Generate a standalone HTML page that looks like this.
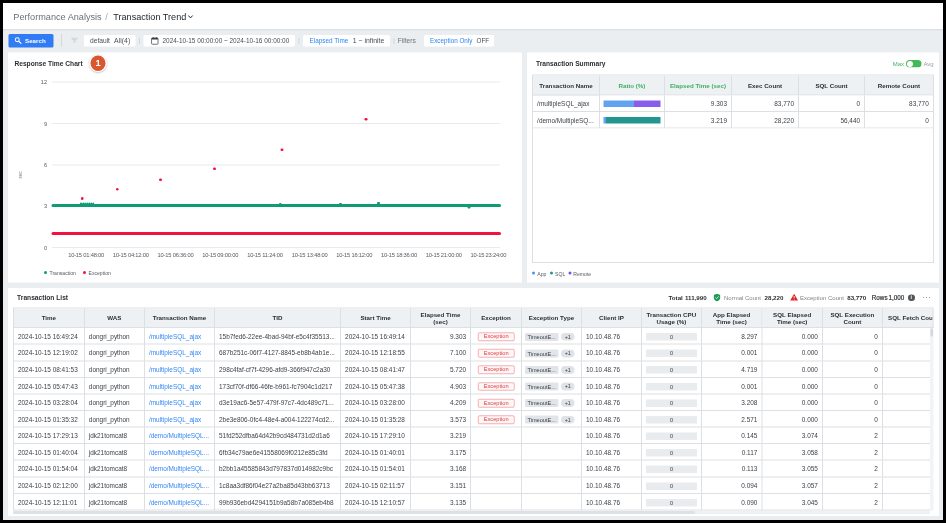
<!DOCTYPE html>
<html><head><meta charset="utf-8"><title>Transaction Trend</title>
<style>
html,body{width:946px;height:523px;overflow:hidden;background:#000;margin:0;padding:0}
#app{position:absolute;left:3px;top:3px;width:940px;height:516.5px;background:#ebeef1;overflow:hidden}
#page{position:absolute;left:-3px;top:-3px;width:1892px;height:1046px;transform:scale(0.5);transform-origin:0 0;filter:saturate(1.001);font-family:"Liberation Sans",sans-serif;color:#3a3f45}

*{box-sizing:border-box;margin:0;padding:0}
.abs{position:absolute}
.hdr{position:absolute;left:0;top:0;width:1892px;height:57.8px;background:#fff}
.t{position:absolute;white-space:nowrap;line-height:1}
.panel{position:absolute;background:#fff}
.pt{font-weight:bold;font-size:13.3px;color:#2b2f33}
.chip{position:absolute;background:#fff;border-radius:3px;height:23.2px;top:70px}
.grid{position:absolute;left:104px;width:896px;height:2px;background:#e8eaed}
.yl{position:absolute;font-size:11.2px;color:#555b61;text-align:right;width:40px;left:54px;line-height:1}
.xl{position:absolute;font-size:11.5px;color:#555b61;top:504.4px;width:100px;text-align:center;line-height:1;letter-spacing:-0.4px}
.dot{position:absolute;width:5.8px;height:5.8px;border-radius:50%;background:#f5103a}
.cell{position:absolute;border-right:2px solid #dce0e4;border-bottom:2px solid #dce0e4;font-size:12.9px;line-height:1;white-space:nowrap;overflow:hidden;color:#3a3f45}
.hc{background:#eef1f4;padding-top:1.6px;font-weight:bold;color:#2b2f33;text-align:center;display:flex;align-items:center;justify-content:center;line-height:1.19;font-size:12.4px}
.c{display:flex;align-items:center;padding:3.6px 8px 0 8px}
.r{justify-content:flex-end}
.lnk{color:#3387f2}
.exc{display:inline-block;border:1.8px solid #ea666c;color:#dc4046;font-size:11.4px;width:72.6px;height:16.8px;line-height:13.4px;text-align:center;border-radius:2.8px;background:#fff6f6;margin-left:5.8px}
.tag{display:inline-block;background:#e1e5e9;color:#3a3f45;font-size:11.2px;height:16px;line-height:16px;width:66.4px;text-align:center;border-radius:2.4px;margin-left:-1.6px}
.pill{display:inline-block;background:#dfe3e7;color:#3a3f45;font-size:11px;height:15.6px;line-height:15.6px;width:27.6px;text-align:center;border-radius:8px;margin-left:5.2px}
.cpu{display:block;width:103.6px;height:15px;background:#e9ecef;font-size:12.4px;line-height:15px;text-align:center;color:#4a4f55;margin-left:0.2px}

</style></head><body>
<div id="app"><div id="page">
<div class="hdr"></div><div class="abs" style="left:0;top:57.8px;width:1892px;height:4.8px;background:linear-gradient(#d9dde1,#ebeef1)"></div>
<div class="t" style="left:26.6px;top:24.4px;font-size:18.3px;color:#6b7178">Performance Analysis</div>
<div class="t" style="left:210.6px;top:24.4px;font-size:18.5px;color:#a4a9af">/</div>
<div class="t" style="left:226.6px;top:24.4px;font-size:18.2px;color:#24282c">Transaction Trend</div>
<svg class="abs" style="left:375px;top:29.4px" width="12" height="10" viewBox="0 0 6 5"><path d="M0.8 1 L3 3.4 L5.2 1" fill="none" stroke="#24282c" stroke-width="1"/></svg>

<div class="abs" style="left:17px;top:67.6px;width:89.6px;height:27.6px;background:#2f7cf6;border-radius:3px;box-shadow:0 0 0 1.4px #f3ecdc"></div>
<svg class="abs" style="left:29.2px;top:74.4px" width="14.8" height="14.8" viewBox="0 0 8 8"><circle cx="3" cy="3" r="2.1" fill="none" stroke="#fff" stroke-width="1.1"/><path d="M4.6 4.6 L7 7" stroke="#fff" stroke-width="1.2" stroke-linecap="round"/></svg>
<div class="t" style="left:50px;top:75.4px;font-size:12.4px;font-weight:bold;color:#fff">Search</div>
<div class="abs" style="left:121.6px;top:68px;width:2px;height:25px;background:#d3d7db"></div>
<svg class="abs" style="left:142.4px;top:75.2px" width="14" height="11.2" viewBox="0 0 7 5.6"><path d="M0.2 0.6h6.6M1.3 2.2h4.4M2.3 3.7h2.4M3.1 5h0.8" stroke="#c3c7cc" stroke-width="0.85" fill="none"/></svg>
<div class="chip" style="left:168px;width:102.8px"></div>
<div class="t" style="left:180px;top:75.2px;font-size:13.3px;color:#4a4f55">default</div>
<div class="t" style="left:228.2px;top:75.2px;font-size:13.8px;color:#4a4f55">All(4)</div>
<div class="abs" style="left:278px;top:76px;width:2px;height:12px;background:#d3d7db"></div>
<div class="chip" style="left:287.2px;width:302.8px"></div>
<svg class="abs" style="left:301.2px;top:72.8px" width="17.2" height="17.2" viewBox="0 0 9 9"><rect x="1.1" y="1.5" width="6.8" height="6.6" rx="0.9" fill="none" stroke="#3a3f45" stroke-width="0.75"/><rect x="1.1" y="1.5" width="6.8" height="1.7" rx="0.5" fill="#3a3f45"/><path d="M2.8 0.5v1.4M6.2 0.5v1.4" stroke="#3a3f45" stroke-width="0.75"/></svg>
<div class="t" style="left:325px;top:75.6px;font-size:12.86px;color:#4a4f55">2024-10-15 00:00:00 ~ 2024-10-16 00:00:00</div>
<div class="abs" style="left:597px;top:76px;width:2px;height:12px;background:#d3d7db"></div>
<div class="chip" style="left:606px;width:174px"></div>
<div class="t" style="left:619px;top:75.6px;font-size:12.8px;color:#2f86f0">Elapsed Time</div>
<div class="t" style="left:705.6px;top:75.2px;font-size:13.7px;color:#4a4f55">1 ~ infinite</div>
<div class="abs" style="left:787px;top:76px;width:2px;height:12px;background:#d3d7db"></div>
<div class="t" style="left:795.6px;top:75.4px;font-size:13.2px;color:#6b7178">Filters</div>
<div class="chip" style="left:848px;width:140px"></div>
<div class="t" style="left:860px;top:75.6px;font-size:12.6px;color:#2f86f0">Exception Only</div>
<div class="t" style="left:953px;top:75.6px;font-size:12.6px;color:#4a4f55">OFF</div>

<div class="panel" style="left:16px;top:105.2px;width:1028px;height:459.8px"></div>
<div class="t pt" style="left:28.8px;top:119.8px">Response Time Chart</div>
<div class="abs" style="left:178.4px;top:109px;width:35.2px;height:35.2px;border-radius:50%;background:#fff;box-shadow:0 1.2px 3.2px rgba(0,0,0,.35)"></div>
<div class="abs" style="left:180.6px;top:111.2px;width:30.8px;height:30.8px;border-radius:50%;background:#d9562f"></div>
<div class="t" style="left:191px;top:116.8px;font-size:18.8px;font-weight:bold;color:#fff">1</div>

<div class="grid" style="top:163px"></div><div class="yl" style="top:159.4px">12</div>
<div class="grid" style="top:246px"></div><div class="yl" style="top:242.4px">9</div>
<div class="grid" style="top:328.8px"></div><div class="yl" style="top:325.2px">6</div>
<div class="grid" style="top:410.4px"></div><div class="yl" style="top:406.8px">3</div>
<div class="grid" style="top:494.4px"></div><div class="yl" style="top:490.8px">0</div>
<div class="t" style="left:36.6px;top:357px;font-size:9.2px;color:#6b7178;transform:rotate(-90deg);transform-origin:left top">sec</div>
<div class="abs" style="left:103px;top:408px;width:899px;height:6px;background:#109b73;border-radius:3px"></div>
<div class="abs" style="left:103px;top:463.6px;width:899px;height:6px;background:#f2123c;border-radius:3px"></div>
<div class="abs" style="left:160.4px;top:405.4px;width:3.4px;height:5px;background:#0b9c73;border-radius:2px"></div>
<div class="abs" style="left:164.5px;top:405.4px;width:3.4px;height:5px;background:#0b9c73;border-radius:2px"></div>
<div class="abs" style="left:168.6px;top:405.4px;width:3.4px;height:5px;background:#0b9c73;border-radius:2px"></div>
<div class="abs" style="left:172.7px;top:405.4px;width:3.4px;height:5px;background:#0b9c73;border-radius:2px"></div>
<div class="abs" style="left:176.8px;top:405.4px;width:3.4px;height:5px;background:#0b9c73;border-radius:2px"></div>
<div class="abs" style="left:180.9px;top:405.4px;width:3.4px;height:5px;background:#0b9c73;border-radius:2px"></div>
<div class="abs" style="left:185px;top:405.4px;width:3.4px;height:5px;background:#0b9c73;border-radius:2px"></div>
<div class="abs" style="left:160.4px;top:406.6px;width:28.4px;height:5px;background:#0b9c73;border-radius:2px"></div>
<div class="abs" style="left:557.6px;top:405.6px;width:5.8px;height:5px;background:#0b9c73;border-radius:2px"></div>
<div class="abs" style="left:678.2px;top:405.6px;width:5.8px;height:5px;background:#0b9c73;border-radius:2px"></div>
<div class="abs" style="left:754px;top:404px;width:5.8px;height:5px;background:#0b9c73;border-radius:2px"></div>
<div class="abs" style="left:934.8px;top:411.8px;width:5.8px;height:5px;background:#0b9c73;border-radius:2px"></div>
<div class="dot" style="left:161.5px;top:394.1px"></div>
<div class="dot" style="left:231.5px;top:375.5px"></div>
<div class="dot" style="left:318.3px;top:356.5px"></div>
<div class="dot" style="left:426.3px;top:334.5px"></div>
<div class="dot" style="left:561.1px;top:296.5px"></div>
<div class="dot" style="left:729.1px;top:235.5px"></div>
<div class="xl" style="left:122.2px">10-15 01:48:00</div>
<div class="xl" style="left:211.6px">10-15 04:12:00</div>
<div class="xl" style="left:301px">10-15 06:36:00</div>
<div class="xl" style="left:390.4px">10-15 09:00:00</div>
<div class="xl" style="left:479.8px">10-15 11:24:00</div>
<div class="xl" style="left:569.2px">10-15 13:48:00</div>
<div class="xl" style="left:658.6px">10-15 16:12:00</div>
<div class="xl" style="left:748px">10-15 18:36:00</div>
<div class="xl" style="left:837.4px">10-15 21:00:00</div>
<div class="xl" style="left:926.8px">10-15 23:24:00</div>
<div class="abs" style="left:87.6px;top:542.2px;width:6px;height:6px;border-radius:50%;background:#0b9c73"></div>
<div class="t" style="left:99px;top:542.4px;font-size:10.2px;color:#555b61">Transaction</div>
<div class="abs" style="left:166px;top:542.2px;width:6px;height:6px;border-radius:50%;background:#f0143c"></div>
<div class="t" style="left:177px;top:542.4px;font-size:10.2px;color:#555b61">Exception</div>

<div class="panel" style="left:1054px;top:105.2px;width:824px;height:459.8px"></div>
<div class="t pt" style="left:1072px;top:120.2px">Transaction Summary</div>
<div class="t" style="left:1785.4px;top:121.4px;font-size:12px;color:#43b660">Max</div>
<div class="abs" style="left:1812px;top:120px;width:31px;height:15.2px;border-radius:8px;background:#45b85a"></div>
<div class="abs" style="left:1813.6px;top:121.6px;width:12px;height:12px;border-radius:50%;background:#fff"></div>
<div class="t" style="left:1846.8px;top:121.4px;font-size:12px;color:#9aa0a6">Avg</div>

<div class="abs" style="left:1064.2px;top:149px;width:803.4px;height:376.6px;border:2px solid #dce0e4"></div>
<div class="cell hc" style="left:1066.2px;top:151px;width:133.6px;height:39.8px;color:#2b2f33;padding-top:3px">Transaction Name</div>
<div class="cell hc" style="left:1199.8px;top:151px;width:130px;height:39.8px;color:#3bb05f;padding-top:3px">Ratio (%)</div>
<div class="cell hc" style="left:1329.8px;top:151px;width:134.2px;height:39.8px;color:#3bb05f;padding-top:3px">Elapsed Time (sec)</div>
<div class="cell hc" style="left:1464px;top:151px;width:134px;height:39.8px;color:#2b2f33;padding-top:3px">Exec Count</div>
<div class="cell hc" style="left:1598px;top:151px;width:132.2px;height:39.8px;color:#2b2f33;padding-top:3px">SQL Count</div>
<div class="cell hc" style="left:1730.2px;top:151px;width:137.4px;height:39.8px;color:#2b2f33;padding-top:3px">Remote Count</div>
<div class="cell c" style="left:1066.2px;top:190.8px;width:133.6px;height:33px;">/multipleSQL_ajax</div>
<div class="cell c" style="left:1199.8px;top:190.8px;width:130px;height:33px;padding:2.4px 0 0 7.6px"><span style="display:block;width:60.6px;height:13.6px;background:#62a3f1"></span><span style="display:block;width:52.8px;height:13.6px;background:#885cec"></span></div>
<div class="cell c r" style="left:1329.8px;top:190.8px;width:134.2px;height:33px;">9.303</div>
<div class="cell c r" style="left:1464px;top:190.8px;width:134px;height:33px;">83,770</div>
<div class="cell c r" style="left:1598px;top:190.8px;width:132.2px;height:33px;">0</div>
<div class="cell c r" style="left:1730.2px;top:190.8px;width:137.4px;height:33px;">83,770</div>
<div class="cell c" style="left:1066.2px;top:223.8px;width:133.6px;height:33.2px;">/demo/MultipleSQ...</div>
<div class="cell c" style="left:1199.8px;top:223.8px;width:130px;height:33.2px;padding:2.4px 0 0 7.6px"><span style="display:block;width:4.4px;height:13.6px;background:#62a3f1"></span><span style="display:block;width:109px;height:13.6px;background:#22968f"></span></div>
<div class="cell c r" style="left:1329.8px;top:223.8px;width:134.2px;height:33.2px;">3.219</div>
<div class="cell c r" style="left:1464px;top:223.8px;width:134px;height:33.2px;">28,220</div>
<div class="cell c r" style="left:1598px;top:223.8px;width:132.2px;height:33.2px;">56,440</div>
<div class="cell c r" style="left:1730.2px;top:223.8px;width:137.4px;height:33.2px;">0</div>
<div class="abs" style="left:1064.2px;top:542.6px;width:6px;height:6px;border-radius:50%;background:#4a90f0"></div>
<div class="t" style="left:1074.6px;top:542.6px;font-size:10.2px;color:#555b61">App</div>
<div class="abs" style="left:1100.2px;top:542.6px;width:6px;height:6px;border-radius:50%;background:#22968f"></div>
<div class="t" style="left:1110.2px;top:542.6px;font-size:10.2px;color:#555b61">SQL</div>
<div class="abs" style="left:1136.6px;top:542.6px;width:6px;height:6px;border-radius:50%;background:#7a4cf0"></div>
<div class="t" style="left:1146.6px;top:542.6px;font-size:10.2px;color:#555b61">Remote</div>

<div class="panel" style="left:16px;top:575.6px;width:1862px;height:456.4px"></div>
<div class="t pt" style="left:34.2px;top:588.2px">Transaction List</div>
<div class="t" style="left:1337px;top:589px;font-size:12.4px;font-weight:bold;color:#2b2f33">Total</div>
<div class="t" style="left:1370px;top:589px;font-size:12.4px;font-weight:bold;color:#2b2f33">111,990</div>
<svg class="abs" style="left:1427px;top:587px" width="14" height="16" viewBox="0 0 7 8"><path d="M3.5 0.2 L6.8 1.5 V4 C6.8 6 5.2 7.3 3.5 7.9 C1.8 7.3 0.2 6 0.2 4 V1.5 Z" fill="#1d9a55"/><path d="M2 4 L3.1 5.1 L5.1 2.9" fill="none" stroke="#fff" stroke-width="0.8"/></svg>
<div class="t" style="left:1448px;top:589.4px;font-size:12px;color:#80868c">Normal Count</div>
<div class="t" style="left:1529px;top:589px;font-size:12.4px;font-weight:bold;color:#2b2f33">28,220</div>
<svg class="abs" style="left:1579.8px;top:587.4px" width="16.6" height="14.8" viewBox="0 0 9 8"><path d="M4.5 0.3 L8.8 7.7 H0.2 Z" fill="#e0242c"/><path d="M4.5 2.8 V5.2" stroke="#fff" stroke-width="0.9"/><circle cx="4.5" cy="6.4" r="0.5" fill="#fff"/></svg>
<div class="t" style="left:1600px;top:589.4px;font-size:12px;color:#80868c">Exception Count</div>
<div class="t" style="left:1694.4px;top:589px;font-size:12.4px;font-weight:bold;color:#2b2f33">83,770</div>
<div class="t" style="left:1743.6px;top:589.4px;font-size:12.6px;color:#2b2f33;-webkit-text-stroke:0.36px #2b2f33">Rows</div>
<div class="t" style="left:1777.2px;top:589.4px;font-size:12.6px;color:#2b2f33;-webkit-text-stroke:0.36px #2b2f33">1,000</div>
<div class="abs" style="left:1816px;top:588.8px;width:13.6px;height:13.6px;border-radius:50%;background:#4f555b"></div>
<div class="t" style="left:1821.2px;top:590.4px;font-size:10.4px;font-weight:bold;color:#fff">i</div>
<div class="t" style="left:1845px;top:587.2px;font-size:14px;color:#6b7178;letter-spacing:1.2px">&#183;&#183;&#183;</div>

<div class="abs" style="left:25.8px;top:615.2px;width:1841.4px;height:405.76px;border-left:2px solid #dce0e4;border-top:2px solid #dce0e4"></div>
<div class="cell hc" style="left:27.8px;top:617.2px;width:141.8px;height:39px;">Time</div>
<div class="cell hc" style="left:169.6px;top:617.2px;width:120.2px;height:39px;">WAS</div>
<div class="cell hc" style="left:289.8px;top:617.2px;width:140.2px;height:39px;">Transaction Name</div>
<div class="cell hc" style="left:430px;top:617.2px;width:252.2px;height:39px;">TID</div>
<div class="cell hc" style="left:682.2px;top:617.2px;width:139.6px;height:39px;">Start Time</div>
<div class="cell hc" style="left:821.8px;top:617.2px;width:120.4px;height:39px;">Elapsed Time<br>(sec)</div>
<div class="cell hc" style="left:942.2px;top:617.2px;width:101.6px;height:39px;">Exception</div>
<div class="cell hc" style="left:1043.8px;top:617.2px;width:120.2px;height:39px;">Exception Type</div>
<div class="cell hc" style="left:1164px;top:617.2px;width:120px;height:39px;">Client IP</div>
<div class="cell hc" style="left:1284px;top:617.2px;width:119.6px;height:39px;">Transaction CPU<br>Usage (%)</div>
<div class="cell hc" style="left:1403.6px;top:617.2px;width:121.2px;height:39px;">App Elapsed<br>Time (sec)</div>
<div class="cell hc" style="left:1524.8px;top:617.2px;width:121px;height:39px;">SQL Elapsed<br>Time (sec)</div>
<div class="cell hc" style="left:1645.8px;top:617.2px;width:120px;height:39px;">SQL Execution<br>Count</div>
<div class="cell hc" style="left:1765.8px;top:617.2px;width:101.4px;height:39px;justify-content:flex-start;padding-left:10.4px;">SQL Fetch Cour</div>
<div class="cell c" style="left:27.8px;top:656.2px;width:141.8px;height:33.16px;">2024-10-15 16:49:24</div>
<div class="cell c" style="left:169.6px;top:656.2px;width:120.2px;height:33.16px;">dongri_python</div>
<div class="cell c" style="left:289.8px;top:656.2px;width:140.2px;height:33.16px;"><span class="lnk">/multipleSQL_ajax</span></div>
<div class="cell c" style="left:430px;top:656.2px;width:252.2px;height:33.16px;">15b7fed6-22ee-4bad-94bf-e5c4f35513...</div>
<div class="cell c" style="left:682.2px;top:656.2px;width:139.6px;height:33.16px;">2024-10-15 16:49:14</div>
<div class="cell c r" style="left:821.8px;top:656.2px;width:120.4px;height:33.16px;">9.303</div>
<div class="cell c" style="left:942.2px;top:656.2px;width:101.6px;height:33.16px;"><span class="exc">Exception</span></div>
<div class="cell c" style="left:1043.8px;top:656.2px;width:120.2px;height:33.16px;"><span class="tag">TimeoutE...</span><span class="pill">+1</span></div>
<div class="cell c" style="left:1164px;top:656.2px;width:120px;height:33.16px;">10.10.48.76</div>
<div class="cell c" style="left:1284px;top:656.2px;width:119.6px;height:33.16px;"><span class="cpu">0</span></div>
<div class="cell c r" style="left:1403.6px;top:656.2px;width:121.2px;height:33.16px;">8.297</div>
<div class="cell c r" style="left:1524.8px;top:656.2px;width:121px;height:33.16px;">0.000</div>
<div class="cell c r" style="left:1645.8px;top:656.2px;width:120px;height:33.16px;">0</div>
<div class="cell c" style="left:1765.8px;top:656.2px;width:94.6px;height:33.16px;border-right:none;"></div>
<div class="cell c" style="left:27.8px;top:689.36px;width:141.8px;height:33.16px;">2024-10-15 12:19:02</div>
<div class="cell c" style="left:169.6px;top:689.36px;width:120.2px;height:33.16px;">dongri_python</div>
<div class="cell c" style="left:289.8px;top:689.36px;width:140.2px;height:33.16px;"><span class="lnk">/multipleSQL_ajax</span></div>
<div class="cell c" style="left:430px;top:689.36px;width:252.2px;height:33.16px;">687b251c-06f7-4127-8845-eb8b4ab1e...</div>
<div class="cell c" style="left:682.2px;top:689.36px;width:139.6px;height:33.16px;">2024-10-15 12:18:55</div>
<div class="cell c r" style="left:821.8px;top:689.36px;width:120.4px;height:33.16px;">7.100</div>
<div class="cell c" style="left:942.2px;top:689.36px;width:101.6px;height:33.16px;"><span class="exc">Exception</span></div>
<div class="cell c" style="left:1043.8px;top:689.36px;width:120.2px;height:33.16px;"><span class="tag">TimeoutE...</span><span class="pill">+1</span></div>
<div class="cell c" style="left:1164px;top:689.36px;width:120px;height:33.16px;">10.10.48.76</div>
<div class="cell c" style="left:1284px;top:689.36px;width:119.6px;height:33.16px;"><span class="cpu">0</span></div>
<div class="cell c r" style="left:1403.6px;top:689.36px;width:121.2px;height:33.16px;">0.001</div>
<div class="cell c r" style="left:1524.8px;top:689.36px;width:121px;height:33.16px;">0.000</div>
<div class="cell c r" style="left:1645.8px;top:689.36px;width:120px;height:33.16px;">0</div>
<div class="cell c" style="left:1765.8px;top:689.36px;width:94.6px;height:33.16px;border-right:none;"></div>
<div class="cell c" style="left:27.8px;top:722.52px;width:141.8px;height:33.16px;">2024-10-15 08:41:53</div>
<div class="cell c" style="left:169.6px;top:722.52px;width:120.2px;height:33.16px;">dongri_python</div>
<div class="cell c" style="left:289.8px;top:722.52px;width:140.2px;height:33.16px;"><span class="lnk">/multipleSQL_ajax</span></div>
<div class="cell c" style="left:430px;top:722.52px;width:252.2px;height:33.16px;">298c4faf-cf7f-4296-afd9-366f947c2a30</div>
<div class="cell c" style="left:682.2px;top:722.52px;width:139.6px;height:33.16px;">2024-10-15 08:41:47</div>
<div class="cell c r" style="left:821.8px;top:722.52px;width:120.4px;height:33.16px;">5.720</div>
<div class="cell c" style="left:942.2px;top:722.52px;width:101.6px;height:33.16px;"><span class="exc">Exception</span></div>
<div class="cell c" style="left:1043.8px;top:722.52px;width:120.2px;height:33.16px;"><span class="tag">TimeoutE...</span><span class="pill">+1</span></div>
<div class="cell c" style="left:1164px;top:722.52px;width:120px;height:33.16px;">10.10.48.76</div>
<div class="cell c" style="left:1284px;top:722.52px;width:119.6px;height:33.16px;"><span class="cpu">0</span></div>
<div class="cell c r" style="left:1403.6px;top:722.52px;width:121.2px;height:33.16px;">4.719</div>
<div class="cell c r" style="left:1524.8px;top:722.52px;width:121px;height:33.16px;">0.000</div>
<div class="cell c r" style="left:1645.8px;top:722.52px;width:120px;height:33.16px;">0</div>
<div class="cell c" style="left:1765.8px;top:722.52px;width:94.6px;height:33.16px;border-right:none;"></div>
<div class="cell c" style="left:27.8px;top:755.68px;width:141.8px;height:33.16px;">2024-10-15 05:47:43</div>
<div class="cell c" style="left:169.6px;top:755.68px;width:120.2px;height:33.16px;">dongri_python</div>
<div class="cell c" style="left:289.8px;top:755.68px;width:140.2px;height:33.16px;"><span class="lnk">/multipleSQL_ajax</span></div>
<div class="cell c" style="left:430px;top:755.68px;width:252.2px;height:33.16px;">173cf70f-df66-46fe-b961-fc7904c1d217</div>
<div class="cell c" style="left:682.2px;top:755.68px;width:139.6px;height:33.16px;">2024-10-15 05:47:38</div>
<div class="cell c r" style="left:821.8px;top:755.68px;width:120.4px;height:33.16px;">4.903</div>
<div class="cell c" style="left:942.2px;top:755.68px;width:101.6px;height:33.16px;"><span class="exc">Exception</span></div>
<div class="cell c" style="left:1043.8px;top:755.68px;width:120.2px;height:33.16px;"><span class="tag">TimeoutE...</span><span class="pill">+1</span></div>
<div class="cell c" style="left:1164px;top:755.68px;width:120px;height:33.16px;">10.10.48.76</div>
<div class="cell c" style="left:1284px;top:755.68px;width:119.6px;height:33.16px;"><span class="cpu">0</span></div>
<div class="cell c r" style="left:1403.6px;top:755.68px;width:121.2px;height:33.16px;">0.001</div>
<div class="cell c r" style="left:1524.8px;top:755.68px;width:121px;height:33.16px;">0.000</div>
<div class="cell c r" style="left:1645.8px;top:755.68px;width:120px;height:33.16px;">0</div>
<div class="cell c" style="left:1765.8px;top:755.68px;width:94.6px;height:33.16px;border-right:none;"></div>
<div class="cell c" style="left:27.8px;top:788.84px;width:141.8px;height:33.16px;">2024-10-15 03:28:04</div>
<div class="cell c" style="left:169.6px;top:788.84px;width:120.2px;height:33.16px;">dongri_python</div>
<div class="cell c" style="left:289.8px;top:788.84px;width:140.2px;height:33.16px;"><span class="lnk">/multipleSQL_ajax</span></div>
<div class="cell c" style="left:430px;top:788.84px;width:252.2px;height:33.16px;">d3e19ac6-5e57-479f-97c7-4dc489c71...</div>
<div class="cell c" style="left:682.2px;top:788.84px;width:139.6px;height:33.16px;">2024-10-15 03:28:00</div>
<div class="cell c r" style="left:821.8px;top:788.84px;width:120.4px;height:33.16px;">4.209</div>
<div class="cell c" style="left:942.2px;top:788.84px;width:101.6px;height:33.16px;"><span class="exc">Exception</span></div>
<div class="cell c" style="left:1043.8px;top:788.84px;width:120.2px;height:33.16px;"><span class="tag">TimeoutE...</span><span class="pill">+1</span></div>
<div class="cell c" style="left:1164px;top:788.84px;width:120px;height:33.16px;">10.10.48.76</div>
<div class="cell c" style="left:1284px;top:788.84px;width:119.6px;height:33.16px;"><span class="cpu">0</span></div>
<div class="cell c r" style="left:1403.6px;top:788.84px;width:121.2px;height:33.16px;">3.208</div>
<div class="cell c r" style="left:1524.8px;top:788.84px;width:121px;height:33.16px;">0.000</div>
<div class="cell c r" style="left:1645.8px;top:788.84px;width:120px;height:33.16px;">0</div>
<div class="cell c" style="left:1765.8px;top:788.84px;width:94.6px;height:33.16px;border-right:none;"></div>
<div class="cell c" style="left:27.8px;top:822px;width:141.8px;height:33.16px;">2024-10-15 01:35:32</div>
<div class="cell c" style="left:169.6px;top:822px;width:120.2px;height:33.16px;">dongri_python</div>
<div class="cell c" style="left:289.8px;top:822px;width:140.2px;height:33.16px;"><span class="lnk">/multipleSQL_ajax</span></div>
<div class="cell c" style="left:430px;top:822px;width:252.2px;height:33.16px;">2be3e806-0fc4-48e4-a004-122274cd2...</div>
<div class="cell c" style="left:682.2px;top:822px;width:139.6px;height:33.16px;">2024-10-15 01:35:28</div>
<div class="cell c r" style="left:821.8px;top:822px;width:120.4px;height:33.16px;">3.573</div>
<div class="cell c" style="left:942.2px;top:822px;width:101.6px;height:33.16px;"><span class="exc">Exception</span></div>
<div class="cell c" style="left:1043.8px;top:822px;width:120.2px;height:33.16px;"><span class="tag">TimeoutE...</span><span class="pill">+1</span></div>
<div class="cell c" style="left:1164px;top:822px;width:120px;height:33.16px;">10.10.48.76</div>
<div class="cell c" style="left:1284px;top:822px;width:119.6px;height:33.16px;"><span class="cpu">0</span></div>
<div class="cell c r" style="left:1403.6px;top:822px;width:121.2px;height:33.16px;">2.571</div>
<div class="cell c r" style="left:1524.8px;top:822px;width:121px;height:33.16px;">0.000</div>
<div class="cell c r" style="left:1645.8px;top:822px;width:120px;height:33.16px;">0</div>
<div class="cell c" style="left:1765.8px;top:822px;width:94.6px;height:33.16px;border-right:none;"></div>
<div class="cell c" style="left:27.8px;top:855.16px;width:141.8px;height:33.16px;">2024-10-15 17:29:13</div>
<div class="cell c" style="left:169.6px;top:855.16px;width:120.2px;height:33.16px;">jdk21tomcat8</div>
<div class="cell c" style="left:289.8px;top:855.16px;width:140.2px;height:33.16px;"><span class="lnk">/demo/MultipleSQL...</span></div>
<div class="cell c" style="left:430px;top:855.16px;width:252.2px;height:33.16px;">51fd252dfba64d42b9cd484731d2d1a6</div>
<div class="cell c" style="left:682.2px;top:855.16px;width:139.6px;height:33.16px;">2024-10-15 17:29:10</div>
<div class="cell c r" style="left:821.8px;top:855.16px;width:120.4px;height:33.16px;">3.219</div>
<div class="cell c" style="left:942.2px;top:855.16px;width:101.6px;height:33.16px;"></div>
<div class="cell c" style="left:1043.8px;top:855.16px;width:120.2px;height:33.16px;"></div>
<div class="cell c" style="left:1164px;top:855.16px;width:120px;height:33.16px;">10.10.48.76</div>
<div class="cell c" style="left:1284px;top:855.16px;width:119.6px;height:33.16px;"><span class="cpu">0</span></div>
<div class="cell c r" style="left:1403.6px;top:855.16px;width:121.2px;height:33.16px;">0.145</div>
<div class="cell c r" style="left:1524.8px;top:855.16px;width:121px;height:33.16px;">3.074</div>
<div class="cell c r" style="left:1645.8px;top:855.16px;width:120px;height:33.16px;">2</div>
<div class="cell c" style="left:1765.8px;top:855.16px;width:94.6px;height:33.16px;border-right:none;"></div>
<div class="cell c" style="left:27.8px;top:888.32px;width:141.8px;height:33.16px;">2024-10-15 01:40:04</div>
<div class="cell c" style="left:169.6px;top:888.32px;width:120.2px;height:33.16px;">jdk21tomcat8</div>
<div class="cell c" style="left:289.8px;top:888.32px;width:140.2px;height:33.16px;"><span class="lnk">/demo/MultipleSQL...</span></div>
<div class="cell c" style="left:430px;top:888.32px;width:252.2px;height:33.16px;">6fb34c79ae6e41558069f0212e85c3fd</div>
<div class="cell c" style="left:682.2px;top:888.32px;width:139.6px;height:33.16px;">2024-10-15 01:40:01</div>
<div class="cell c r" style="left:821.8px;top:888.32px;width:120.4px;height:33.16px;">3.175</div>
<div class="cell c" style="left:942.2px;top:888.32px;width:101.6px;height:33.16px;"></div>
<div class="cell c" style="left:1043.8px;top:888.32px;width:120.2px;height:33.16px;"></div>
<div class="cell c" style="left:1164px;top:888.32px;width:120px;height:33.16px;">10.10.48.76</div>
<div class="cell c" style="left:1284px;top:888.32px;width:119.6px;height:33.16px;"><span class="cpu">0</span></div>
<div class="cell c r" style="left:1403.6px;top:888.32px;width:121.2px;height:33.16px;">0.117</div>
<div class="cell c r" style="left:1524.8px;top:888.32px;width:121px;height:33.16px;">3.058</div>
<div class="cell c r" style="left:1645.8px;top:888.32px;width:120px;height:33.16px;">2</div>
<div class="cell c" style="left:1765.8px;top:888.32px;width:94.6px;height:33.16px;border-right:none;"></div>
<div class="cell c" style="left:27.8px;top:921.48px;width:141.8px;height:33.16px;">2024-10-15 01:54:04</div>
<div class="cell c" style="left:169.6px;top:921.48px;width:120.2px;height:33.16px;">jdk21tomcat8</div>
<div class="cell c" style="left:289.8px;top:921.48px;width:140.2px;height:33.16px;"><span class="lnk">/demo/MultipleSQL...</span></div>
<div class="cell c" style="left:430px;top:921.48px;width:252.2px;height:33.16px;">b2bb1a45585843d797837d014982c9bc</div>
<div class="cell c" style="left:682.2px;top:921.48px;width:139.6px;height:33.16px;">2024-10-15 01:54:01</div>
<div class="cell c r" style="left:821.8px;top:921.48px;width:120.4px;height:33.16px;">3.168</div>
<div class="cell c" style="left:942.2px;top:921.48px;width:101.6px;height:33.16px;"></div>
<div class="cell c" style="left:1043.8px;top:921.48px;width:120.2px;height:33.16px;"></div>
<div class="cell c" style="left:1164px;top:921.48px;width:120px;height:33.16px;">10.10.48.76</div>
<div class="cell c" style="left:1284px;top:921.48px;width:119.6px;height:33.16px;"><span class="cpu">0</span></div>
<div class="cell c r" style="left:1403.6px;top:921.48px;width:121.2px;height:33.16px;">0.113</div>
<div class="cell c r" style="left:1524.8px;top:921.48px;width:121px;height:33.16px;">3.055</div>
<div class="cell c r" style="left:1645.8px;top:921.48px;width:120px;height:33.16px;">2</div>
<div class="cell c" style="left:1765.8px;top:921.48px;width:94.6px;height:33.16px;border-right:none;"></div>
<div class="cell c" style="left:27.8px;top:954.64px;width:141.8px;height:33.16px;">2024-10-15 02:12:00</div>
<div class="cell c" style="left:169.6px;top:954.64px;width:120.2px;height:33.16px;">jdk21tomcat8</div>
<div class="cell c" style="left:289.8px;top:954.64px;width:140.2px;height:33.16px;"><span class="lnk">/demo/MultipleSQL...</span></div>
<div class="cell c" style="left:430px;top:954.64px;width:252.2px;height:33.16px;">1c8aa3df86f04e27a2ba85d43bb63713</div>
<div class="cell c" style="left:682.2px;top:954.64px;width:139.6px;height:33.16px;">2024-10-15 02:11:57</div>
<div class="cell c r" style="left:821.8px;top:954.64px;width:120.4px;height:33.16px;">3.151</div>
<div class="cell c" style="left:942.2px;top:954.64px;width:101.6px;height:33.16px;"></div>
<div class="cell c" style="left:1043.8px;top:954.64px;width:120.2px;height:33.16px;"></div>
<div class="cell c" style="left:1164px;top:954.64px;width:120px;height:33.16px;">10.10.48.76</div>
<div class="cell c" style="left:1284px;top:954.64px;width:119.6px;height:33.16px;"><span class="cpu">0</span></div>
<div class="cell c r" style="left:1403.6px;top:954.64px;width:121.2px;height:33.16px;">0.094</div>
<div class="cell c r" style="left:1524.8px;top:954.64px;width:121px;height:33.16px;">3.057</div>
<div class="cell c r" style="left:1645.8px;top:954.64px;width:120px;height:33.16px;">2</div>
<div class="cell c" style="left:1765.8px;top:954.64px;width:94.6px;height:33.16px;border-right:none;"></div>
<div class="cell c" style="left:27.8px;top:987.8px;width:141.8px;height:33.16px;">2024-10-15 12:11:01</div>
<div class="cell c" style="left:169.6px;top:987.8px;width:120.2px;height:33.16px;">jdk21tomcat8</div>
<div class="cell c" style="left:289.8px;top:987.8px;width:140.2px;height:33.16px;"><span class="lnk">/demo/MultipleSQL...</span></div>
<div class="cell c" style="left:430px;top:987.8px;width:252.2px;height:33.16px;">99b936ebd4294151b9a58b7a085eb4b8</div>
<div class="cell c" style="left:682.2px;top:987.8px;width:139.6px;height:33.16px;">2024-10-15 12:10:57</div>
<div class="cell c r" style="left:821.8px;top:987.8px;width:120.4px;height:33.16px;">3.135</div>
<div class="cell c" style="left:942.2px;top:987.8px;width:101.6px;height:33.16px;"></div>
<div class="cell c" style="left:1043.8px;top:987.8px;width:120.2px;height:33.16px;"></div>
<div class="cell c" style="left:1164px;top:987.8px;width:120px;height:33.16px;">10.10.48.76</div>
<div class="cell c" style="left:1284px;top:987.8px;width:119.6px;height:33.16px;"><span class="cpu">0</span></div>
<div class="cell c r" style="left:1403.6px;top:987.8px;width:121.2px;height:33.16px;">0.090</div>
<div class="cell c r" style="left:1524.8px;top:987.8px;width:121px;height:33.16px;">3.045</div>
<div class="cell c r" style="left:1645.8px;top:987.8px;width:120px;height:33.16px;">2</div>
<div class="cell c" style="left:1765.8px;top:987.8px;width:94.6px;height:33.16px;border-right:none;"></div>
<div class="abs" style="left:1860.4px;top:656.2px;width:6.8px;height:364.76px;background:#f1f3f5"></div>
<div class="abs" style="left:1861px;top:657px;width:5px;height:16px;background:#d4d8dc;border-radius:2.4px"></div>
<div class="abs" style="left:25.8px;top:1020.96px;width:1834.6px;height:7.2px;background:#eef0f2"></div>
<div class="abs" style="left:25.8px;top:1021.56px;width:1364px;height:6px;background:#dde0e4;border-radius:3px"></div>

</div></div></body></html>
